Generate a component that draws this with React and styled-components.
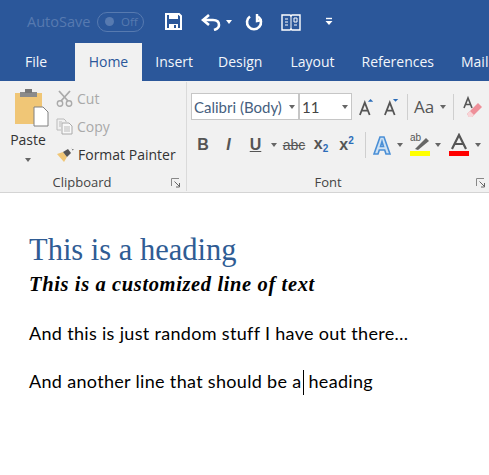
import React from 'react';
import styled, { createGlobalStyle } from 'styled-components';

const Global = createGlobalStyle`
  html, body { margin: 0; padding: 0; background: #fff; }
  body { font-family: "Open Sans", "Noto Sans", sans-serif; overflow: hidden; }
`;
const Page = styled.div`width: 489px; height: 475px; overflow: hidden; display: flex; flex-direction: column;`;
const TitleBar = styled.div`height: 43px; background: #2b579a; display: flex; align-items: center; padding-left: 27px; flex: none; color: #fff;`;
const AutoSave = styled.span`font-size: 14.5px; color: #577ab0; width: 70px; white-space: nowrap;`;
const Toggle = styled.div`width: 47px; height: 20px; box-sizing: border-box; border: 1px solid #577ab0; border-radius: 10px; display: flex; align-items: center; padding-left: 7px; gap: 7px; color: #577ab0; font-size: 11.5px; margin-right: 21px;`;
const Knob = styled.i`width: 9px; height: 9px; border-radius: 50%; background: #577ab0; flex: none;`;
const QatIcon = styled.div`width: ${p => p.$w}px; display: flex; flex: none;`;
const Tabs = styled.div`height: 38px; background: #2b579a; display: flex; flex: none; overflow: hidden; padding-left: 11.5px;`;
const Tab = styled.div`
  padding: 0 13.5px; margin-right: ${p => p.$gap ?? 0}px; line-height: 37px; font-size: 14px; white-space: nowrap;
  color: ${p => p.$active ? '#2b579a' : '#f3f6fb'}; background: ${p => p.$active ? '#f1f1f1' : 'transparent'};
`;
const Ribbon = styled.div`height: 111px; background: #f1f1f1; border-bottom: 1px solid #d4d4d4; flex: none; display: flex; color: #444;`;
const Clipboard = styled.div`width: 186px; border-right: 1px solid #dadada; flex: none; display: flex; flex-direction: column; height: 109px; margin-top: 1px; position: relative;`;
const ClipBody = styled.div`display: flex; height: 92px;`;
const PasteCol = styled.div`width: 56px; flex: none; display: flex; flex-direction: column; align-items: center; padding-top: 7px; font-size: 14px; color: #333;`;
const PasteIcon = styled.svg`margin-left: 6px; flex: none;`;
const PasteLabel = styled.div`line-height: 18px; margin-top: 4px;`;
const ClipList = styled.div`display: flex; flex-direction: column; padding-top: 2px;`;
const ClipItem = styled.div`height: 28px; display: flex; align-items: center; gap: 4px; font-size: 14px; white-space: nowrap; color: ${p => p.$off ? '#a9a9a9' : '#333'};`;
const GroupFoot = styled.div`height: 16px; display: flex; align-items: center; justify-content: center; font-size: 13px; color: #444; position: relative; padding-right: ${p => p.$pr}px;`;
const Launcher = styled.svg`position: absolute; right: ${p => p.$r}px; top: 4px;`;
const FontGroup = styled.div`flex: 1; display: flex; flex-direction: column; height: 109px; margin-top: 1px; padding-left: 4px;`;
const FontBody = styled.div`height: 92px; display: flex; flex-direction: column;`;
const RowTop = styled.div`display: flex; align-items: center; height: 27px; margin-top: 11px;`;
const Combo = styled.div`
  width: ${p => p.$w}px; height: 27px; box-sizing: border-box; background: #fff; border: 1px solid #c6c6c6; flex: none;
  display: flex; align-items: center; padding-left: 2px; font-family: "Lato", sans-serif; font-size: 15px; white-space: nowrap; overflow: hidden;
  color: ${p => p.$c}; position: relative; margin-right: ${p => p.$mr ?? 0}px;
`;
const ComboCaret = styled.i`position: absolute; right: 3px; top: 11px; width: 0; height: 0; border: 3.5px solid transparent; border-top: 4px solid #666; border-bottom: 0;`;
const Cell = styled.div`width: ${p => p.$w}px; flex: none; display: flex; align-items: center; justify-content: center; height: 27px;`;
const Sep = styled.i`width: 1px; height: ${p => p.$h ?? 26}px; background: #cfcfcf; flex: none;`;
const RowBottom = styled.div`display: flex; align-items: center; height: 27px; margin-top: 11px;`;
const Caret = styled.i`width: 0; height: 0; border: 3.5px solid transparent; border-top: 4px solid #666; border-bottom: 0; display: block;`;
const FmtLetter = styled.span`
  font-family: "Liberation Sans", sans-serif; font-size: 16px; font-weight: 700; color: #555;
  font-style: ${p => p.$i ? 'italic' : 'normal'}; text-decoration: ${p => p.$u ? 'underline' : p.$s ? 'line-through' : 'none'}; white-space: nowrap;
  sub, sup { font-size: 10px; color: #2b6cb8; }
  sub { vertical-align: -3px; } sup { vertical-align: 6px; }
`;
const Aa = styled.span`font-family: "Open Sans", sans-serif; font-size: 17px; color: #555; font-weight: 500;`;
const Doc = styled.div`flex: 1; background: #fff; padding: 38px 0 0 29px; color: #000;`;
const Heading = styled.div`font-family: "Liberation Serif", serif; font-size: 30.5px; line-height: 38px; color: #2f5c94; white-space: nowrap;`;
const Custom = styled.div`font-family: "Liberation Serif", serif; font-style: italic; font-weight: 700; font-size: 20.5px; line-height: 28px; margin-top: 1px; letter-spacing: .62px; white-space: nowrap;`;
const Para = styled.div`font-family: "Lato", sans-serif; font-size: 18px; letter-spacing: .32px; line-height: 24px; white-space: nowrap; margin-top: ${p => p.$mt}px;`;
const TextCaret = styled.i`display: inline-block; width: 1px; height: 25px; background: #000; vertical-align: -7px; margin: 0 0 0 1px;`;

const LauncherIcon = ({ r }) => (
  <Launcher $r={r} width="10" height="10" viewBox="0 0 10 10">
    <path d="M.5 8V.5H8" fill="none" stroke="#888" />
    <path d="M3.5 3.5L8 8M8.5 5v4H5" fill="none" stroke="#666" />
  </Launcher>
);

export default function App() {
  return (
    <Page>
      <Global />
      <TitleBar>
        <AutoSave>AutoSave</AutoSave>
        <Toggle><Knob />Off</Toggle>
        <QatIcon $w={36}>
          <svg width="17" height="17" viewBox="0 0 17 17"><path d="M1 1h13l2 2v13H1z" fill="none" stroke="#fff" strokeWidth="2" /><path d="M4 1h9v5H4zM4 11h9v5H4z" fill="#fff" /><rect x="9" y="12" width="2" height="3" fill="#2b579a" /></svg>
        </QatIcon>
        <QatIcon $w={25}>
          <svg width="20" height="18" viewBox="0 0 20 18"><path d="M8 2L2 7l6 5" fill="none" stroke="#fff" strokeWidth="2.6" /><path d="M3 7h9c4 0 6 2 6 5s-2 4-5 5" fill="none" stroke="#fff" strokeWidth="2.6" /></svg>
        </QatIcon>
        <QatIcon $w={19}><Caret style={{ borderTopColor: '#fff' }} /></QatIcon>
        <QatIcon $w={36}>
          <svg width="18" height="18" viewBox="0 0 18 18"><path d="M5 3.500a7 7 0 1 0 8 0" fill="none" stroke="#fff" strokeWidth="2.6" /><path d="M12 1v7l5-1" fill="none" stroke="#fff" strokeWidth="2.4" /></svg>
        </QatIcon>
        <QatIcon $w={44}>
          <svg width="20" height="18" viewBox="0 0 20 18"><path d="M1 2h8l1 1 1-1h8v15h-8l-1-1-1 1H1z" fill="none" stroke="#fff" strokeWidth="1.4" /><path d="M10 3v13M4 6h3M4 9h3M4 12h3M13 5h3v4h-3zM13 12h3" fill="none" stroke="#fff" /></svg>
        </QatIcon>
        <QatIcon $w={10}>
          <svg width="8" height="9" viewBox="0 0 8 9"><path d="M1 1.500h6" stroke="#fff" strokeWidth="1.4" /><path d="M.5 4h7L4 8z" fill="#fff" /></svg>
        </QatIcon>
      </TitleBar>
      <Tabs>
        <Tab $gap={14.5}>File</Tab>
        <Tab $active>Home</Tab>
        <Tab $gap={-2}>Insert</Tab>
        <Tab $gap={1}>Design</Tab>
        <Tab>Layout</Tab>
        <Tab>References</Tab>
        <Tab>Mailings</Tab>
      </Tabs>
      <Ribbon>
        <Clipboard>
          <ClipBody>
            <PasteCol>
              <PasteIcon width="35" height="38" viewBox="0 0 35 38">
                <path d="M1 4h27v31H1z" fill="#f0c676" />
                <path d="M6 3h17v5H6z" fill="#8b8b8b" />
                <path d="M11 0h7v4h-7z" fill="#777" />
                <path d="M20 18h9l5 5v14H20z" fill="#fff" stroke="#808080" />
              </PasteIcon>
              <PasteLabel>Paste</PasteLabel>
              <Caret style={{ marginTop: 9 }} />
            </PasteCol>
            <ClipList>
              <ClipItem $off>
                <svg width="17" height="17" viewBox="0 0 17 17"><path d="M3 1l9 10M14 1L5 11" stroke="#aaa" strokeWidth="1.8" fill="none" /><circle cx="4" cy="13.5" r="2.7" fill="none" stroke="#aaa" strokeWidth="1.4" /><circle cx="13" cy="13.5" r="2.7" fill="none" stroke="#aaa" strokeWidth="1.4" /></svg>
                <span>Cut</span>
              </ClipItem>
              <ClipItem $off>
                <svg width="17" height="17" viewBox="0 0 17 17"><path d="M1 1h7l2 2v1M1 1v11h4" fill="none" stroke="#bbb" /><path d="M6 5h7l3 3v8H6z" fill="#f8f8f8" stroke="#aaa" /><path d="M8 9h6M8 11h6M8 13h6M3 4h3M3 6h2M3 8h2" stroke="#bbb" /></svg>
                <span>Copy</span>
              </ClipItem>
              <ClipItem>
                <svg width="18" height="17" viewBox="0 0 18 17"><path d="M1 8l6-2 4 5-3 5z" fill="#f0c676" /><path d="M7 6l5-3 3 4-4 4z" fill="#555" /><path d="M15 1l1 2 2 .5-1.500 1" fill="#666" /></svg>
                <span>Format Painter</span>
              </ClipItem>
            </ClipList>
          </ClipBody>
          <GroupFoot $pr={22}>Clipboard<LauncherIcon r={5} /></GroupFoot>
        </Clipboard>
        <FontGroup>
          <FontBody>
            <RowTop>
              <Combo $w={108} $c="#46607e">Calibri (Body)<ComboCaret /></Combo>
              <Combo $w={53} $c="#444" $mr={5}>11<ComboCaret /></Combo>
              <Cell $w={20}>
                <svg width="16" height="18" viewBox="0 0 18 20"><path d="M1 19L6.500 5 12 19M3.500 14h6" fill="none" stroke="#555" strokeWidth="2" /><path d="M10 4l3-3 3 3z" fill="#2b6cb8" /></svg>
              </Cell>
              <Cell $w={30}>
                <svg width="16" height="18" viewBox="0 0 18 20"><path d="M1 19L6.500 5 12 19M3.500 14h6" fill="none" stroke="#555" strokeWidth="2" /><path d="M10 1l3 3 3-3z" fill="#2b6cb8" /></svg>
              </Cell>
              <Sep />
              <Cell $w={32}><Aa>Aa</Aa></Cell>
              <Caret />
              <Cell $w={7} />
              <Sep />
              <Cell $w={37}>
                <svg width="20" height="24" viewBox="0 0 20 24"><path d="M1 13L5 3l4 10M3 9.500h4" fill="none" stroke="#555" strokeWidth="1.6" /><path d="M4 19l11-11 4 4-10 10H6z" fill="#ee8f99" /><path d="M4 19l3-3 4 4-2 2H6z" fill="#f8d5d8" /></svg>
              </Cell>
            </RowTop>
            <RowBottom>
              <Cell $w={24}><FmtLetter>B</FmtLetter></Cell>
              <Cell $w={27}><FmtLetter $i>I</FmtLetter></Cell>
              <Cell $w={27}><FmtLetter $u>U</FmtLetter></Cell>
              <Cell $w={9}><Caret /></Cell>
              <Cell $w={32}><FmtLetter $s style={{ fontWeight: 400, fontSize: 14 }}>abc</FmtLetter></Cell>
              <Cell $w={22}><FmtLetter>x<sub>2</sub></FmtLetter></Cell>
              <Cell $w={29}><FmtLetter>x<sup>2</sup></FmtLetter></Cell>
              <Cell $w={4} />
              <Sep />
              <Cell $w={31}>
                <svg width="18" height="20" viewBox="0 0 18 20"><path d="M1 19L7 2h4l6 17h-4l-1.300-4H6.300L5 19zM7.500 11.500h3L9 6.500z" fill="#cfe2f3" stroke="#4a8fd6" strokeWidth="1.6" /></svg>
              </Cell>
              <Cell $w={5}><Caret /></Cell>
              <Cell $w={8} />
              <Cell $w={21}>
                <svg width="21" height="24" viewBox="0 0 21 24"><text x="0" y="8" fontFamily="Liberation Sans" fontSize="10" fill="#555">ab</text><path d="M5 16L16 5l3 3L8 17z" fill="#666" /><rect y="18" width="20" height="5" fill="#ffff00" /></svg>
              </Cell>
              <Cell $w={3} />
              <Cell $w={8}><Caret /></Cell>
              <Cell $w={7} />
              <Cell $w={20}>
                <svg width="20" height="24" viewBox="0 0 20 24"><path d="M3 16L10 2l7 14M5.500 11h9" fill="none" stroke="#555" strokeWidth="2.200" /><rect y="18" width="20" height="5" fill="#ff0000" /></svg>
              </Cell>
              <Cell $w={5} />
              <Cell $w={8}><Caret /></Cell>
            </RowBottom>
          </FontBody>
          <GroupFoot $pr={26}>Font<LauncherIcon r={5} /></GroupFoot>
        </FontGroup>
      </Ribbon>
      <Doc>
        <Heading>This is a heading</Heading>
        <Custom>This is a customized line of text</Custom>
        <Para $mt={23}>And this is just random stuff I have out there…</Para>
        <Para $mt={24}>And another line that should be a<TextCaret /> heading</Para>
      </Doc>
    </Page>
  );
}
